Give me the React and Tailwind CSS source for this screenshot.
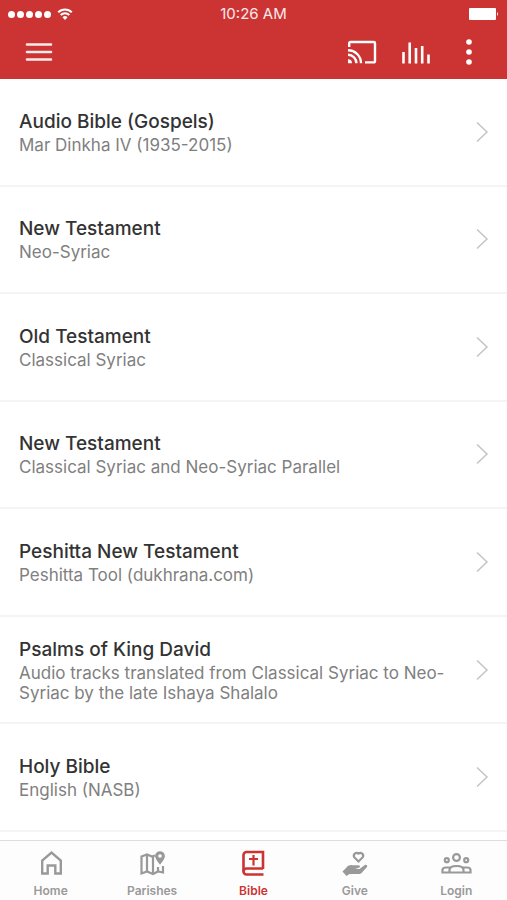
const books = [
  { title: 'Audio Bible (Gospels)', subtitle: 'Mar Dinkha IV (1935-2015)' },
  { title: 'New Testament', subtitle: 'Neo-Syriac' },
  { title: 'Old Testament', subtitle: 'Classical Syriac' },
  { title: 'New Testament', subtitle: 'Classical Syriac and Neo-Syriac Parallel' },
  { title: 'Peshitta New Testament', subtitle: 'Peshitta Tool (dukhrana.com)' },
  { title: 'Psalms of King David', subtitle: 'Audio tracks translated from Classical Syriac to Neo-Syriac by the late Ishaya Shalalo' },
  { title: 'Holy Bible', subtitle: 'English (NASB)' },
];

function HomeIcon() {
  return (
    <svg viewBox="0 0 32 32" className="w-8 h-8" fill="none" stroke="currentColor" strokeWidth="2.4">
      <path d="M7.200 26.500V13.500L16.500 5.500l9.300 8v13h-5.500v-8h-7.600v8z" />
    </svg>
  );
}

function MapIcon() {
  return (
    <svg viewBox="0 0 32 32" className="w-8 h-8" fill="none" stroke="currentColor" strokeWidth="2.2">
      <path d="M19 8.500l-3 1-5-2-5.500 2v17l5.500-2 6 2.500 5-2.500 5 1V19" />
      <path d="M11 8v16.500M17 10v16.500M22 20v5" />
      <path d="M24 17c-3-3.500-4.500-5.500-4.500-7.500a4.500 4.500 0 0 1 9 0c0 2-1.500 4-4.500 7.500z" fill="currentColor" stroke="none" />
      <path d="M24 16c-3-4-3.800-5-3.800-7a3.800 3.800 0 0 1 7.600 0c0 2-.8 3-3.800 7z" strokeWidth="2" />
      <circle cx="24" cy="9" r="1.800" fill="white" stroke="none" />
    </svg>
  );
}

function BibleIcon() {
  return (
    <svg viewBox="0 0 32 32" className="w-8 h-8" fill="none" stroke="currentColor" strokeWidth="2.600">
      <path d="M26 22V5H9.500a3 3 0 0 0-3 3v16.500a3 3 0 0 0 3 3h17" />
      <path d="M6.500 24.500a3 3 0 0 1 3-3H26" />
      <path d="M16.500 8v10.500M12 12h9" strokeWidth="2.200" />
    </svg>
  );
}

function GiveIcon() {
  return (
    <svg viewBox="0 0 32 32" className="w-8 h-8">
      <path
        d="M19.500 14.500l-4.300-4.300a2.900 2.900 0 0 1 4.300-3.700 2.900 2.900 0 0 1 4.300 3.700z"
        fill="none"
        stroke="currentColor"
        strokeWidth="2.200"
      />
      <path
        d="M3.500 24.500l4-4c1.500-2 4-2.700 6-2.300h6c1.500 0 2 2 .5 2.500l-4 1.300h4.500l5-3.700c1.500-1.200 3.500 0 2.500 1.700l-5 5.500c-1 1-2 1.500-3.500 1.500h-9L7.500 29z"
        fill="currentColor"
      />
    </svg>
  );
}

function PeopleIcon() {
  return (
    <svg viewBox="0 0 32 32" className="w-8 h-8" fill="none" stroke="currentColor" strokeWidth="2.2">
      <circle cx="16.500" cy="10.500" r="3.400" />
      <circle cx="6.800" cy="13.200" r="2" />
      <circle cx="26.200" cy="13.200" r="2" />
      <path d="M9.500 25.500v-2.500q0-4 7-4t7 4v2.500zM9.500 25.500H2.500v-2.500q0-2.500 3.500-2.500h5M23.500 25.500h7v-2.500q0-2.500-3.500-2.500h-5" />
    </svg>
  );
}

const tabs = [
  { id: 'home', label: 'Home', icon: HomeIcon },
  { id: 'parishes', label: 'Parishes', icon: MapIcon },
  { id: 'bible', label: 'Bible', icon: BibleIcon },
  { id: 'give', label: 'Give', icon: GiveIcon },
  { id: 'login', label: 'Login', icon: PeopleIcon },
];

function StatusBar() {
  return (
    <div className="grid grid-cols-3 items-center h-7 px-2">
      <div className="flex items-center gap-0.5">
        {[1, 2, 3, 4, 5].map(dot => (
          <span key={dot} className="w-[7px] h-[7px] rounded-full bg-white" />
        ))}
        <svg viewBox="0 0 16 12" className="w-4 h-3 ml-1" fill="none" stroke="currentColor" strokeWidth="2">
          <path d="M1.200 4.200a9.600 9.600 0 0 1 13.600 0M3.700 7a6 6 0 0 1 8.600 0" />
          <path d="M8 12l-2.500-2.700a3.500 3.500 0 0 1 5 0z" fill="currentColor" stroke="none" />
        </svg>
      </div>
      <span className="text-center text-[15px] leading-5 text-white/90 whitespace-nowrap">10:26 AM</span>
      <svg viewBox="0 0 30 12" className="justify-self-end w-[30px] h-3" fill="currentColor">
        <rect width="27" height="12" rx="1" />
        <path d="M28 4q2 2 0 4z" />
      </svg>
    </div>
  );
}

function Header() {
  return (
    <header className="bg-[#cc3333] text-white">
      <StatusBar />
      <div className="flex items-center h-[51px] px-6 pb-1">
        <button type="button" aria-label="Menu">
          <svg viewBox="0 0 30 24" className="w-[30px] h-6" stroke="currentColor" strokeOpacity="0.9" strokeWidth="2.600" strokeLinecap="round">
            <path d="M3 4.500h24M3 12h24M3 19.500h24" />
          </svg>
        </button>
        <div className="flex items-center gap-6 ml-auto">
          <button type="button" aria-label="Cast">
            <svg viewBox="0 0 30 24" className="w-[30px] h-6" fill="none" stroke="currentColor" strokeWidth="2.400">
              <path d="M2.200 7V3.200a1.200 1.200 0 0 1 1.200-1.200h23.400a1.200 1.200 0 0 1 1.200 1.200v18a1.200 1.200 0 0 1-1.200 1.200H18" />
              <path d="M1 10.200a13 13 0 0 1 13 13M1 14.800a8.400 8.400 0 0 1 8.400 8.400" />
              <path d="M1 19.200v4h4a4 4 0 0 0-4-4z" fill="currentColor" stroke="none" />
            </svg>
          </button>
          <button type="button" aria-label="Now playing">
            <svg viewBox="0 0 30 24" className="w-[30px] h-6" stroke="currentColor" strokeWidth="2.600">
              <path d="M2.500 12v11.500M8.700 2.500v21M15 8v15.500M21.200 6v17.500M27.500 14.500v9" />
            </svg>
          </button>
          <button type="button" aria-label="More" className="flex justify-center w-7">
            <svg viewBox="0 0 8 26" className="w-2 h-[26px]" fill="currentColor">
              <circle cx="4" cy="3" r="2.800" />
              <circle cx="4" cy="13" r="2.800" />
              <circle cx="4" cy="23" r="2.800" />
            </svg>
          </button>
        </div>
      </div>
    </header>
  );
}

function App() {
  return (
    <div className="flex flex-col min-h-screen bg-white font-['Inter',sans-serif]">
      <Header />

      <ul className="grid auto-rows-fr flex-1 pb-2">
        {books.map((book, index) => (
          <li key={index} className="flex border-b-2 border-[#f4f4f4]">
            <a href="#" className="flex flex-1 items-center justify-between pl-[19px] pr-[18px]">
              <div className="max-w-[430px]">
                <h2 className="text-[19px] leading-[26px] font-medium text-[#333333]">{book.title}</h2>
                <p className="text-[17px] leading-5 text-[#808080]">{book.subtitle}</p>
              </div>
              <svg viewBox="0 0 14 22" className="w-3.5 h-[22px] shrink-0 text-[#c4c4c4]" fill="none" stroke="currentColor" strokeWidth="1.500">
                <path d="M2 1.500l10 9.500-10 9.500" />
              </svg>
            </a>
          </li>
        ))}
      </ul>

      <nav className="grid grid-cols-5 h-[60px] border-t border-[#dddddd] bg-[#fdfdfd]">
        {tabs.map(tab => {
          const Icon = tab.icon;
          return (
            <a
              key={tab.id}
              href="#"
              className={`flex flex-col items-center pt-1.5 ${tab.id === 'bible' ? 'text-[#cc3333]' : 'text-[#999999]'}`}
            >
              <Icon />
              <span className="mt-1 text-xs leading-4 font-semibold">{tab.label}</span>
            </a>
          );
        })}
      </nav>
    </div>
  );
}

export default App;
